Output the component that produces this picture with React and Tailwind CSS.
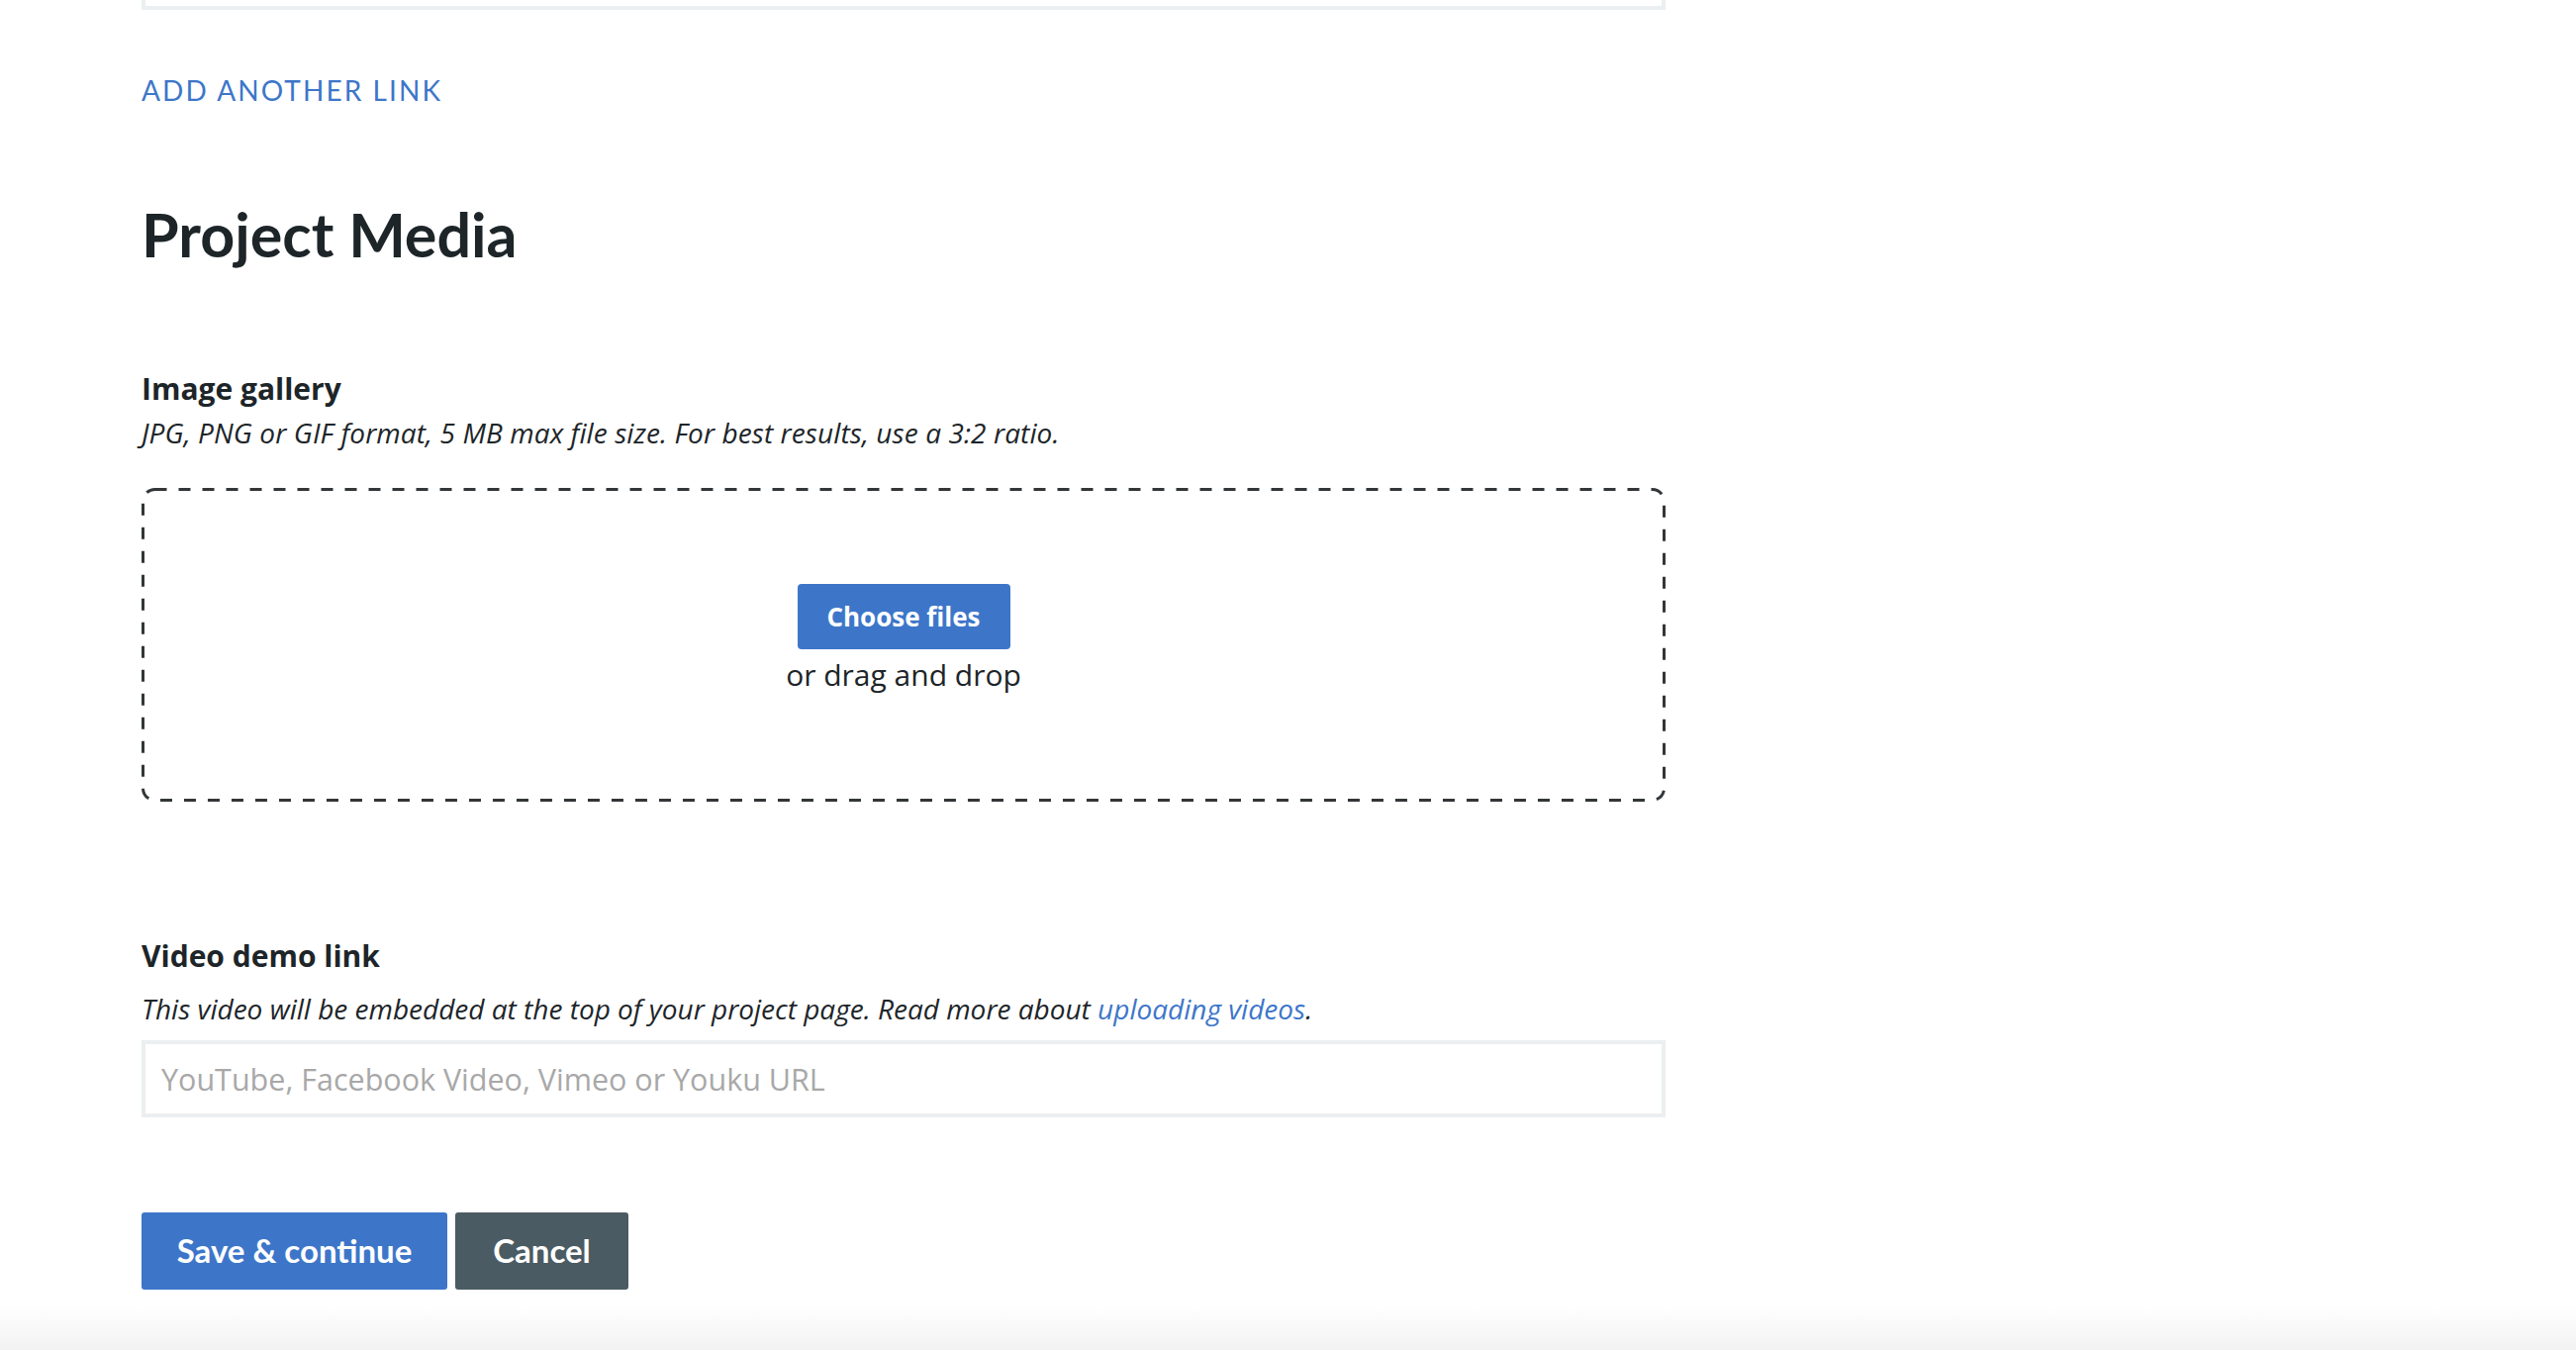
import React from "react";

const lato = { fontFamily: "Lato, 'Open Sans', sans-serif" };
const open = { fontFamily: "'Open Sans', Lato, sans-serif" };

export default function App() {
  return (
    <div className="w-full min-h-[1364px] bg-white text-[#1d2529] flex flex-col" style={lato}>
      <div className="pl-[143px] w-[1683px] flex flex-col">
        <div className="h-[10px] border-x-[4px] border-b-[4px] border-[#eceff1] bg-white" />
        <a className="mt-[67px] self-start text-[28px] leading-none tracking-[2.1px] text-[#3d76c9] uppercase">
          Add another link
        </a>
        <h1 className="mt-[101px] text-[61px] leading-none font-bold">Project Media</h1>

        <h3 className="mt-[111px] text-[30px] leading-none font-bold" style={open}>Image gallery</h3>
        <p className="mt-[15px] text-[28px] leading-none italic tracking-[0.1px]" style={open}>
          JPG, PNG or GIF format, 5 MB max file size. For best results, use a 3:2 ratio.
        </p>
        <div className="relative mt-[42px] h-[317px] rounded-[12px] flex flex-col items-center pt-[97px]">
          <svg className="absolute inset-0 w-full h-full pointer-events-none" preserveAspectRatio="none">
            <rect x="1.5" y="1.5" width="calc(100% - 3px)" height="calc(100% - 3px)" rx="12" fill="none" stroke="#333638" strokeWidth="3" strokeDasharray="12 12" />
          </svg>
          <button className="w-[215px] h-[66px] bg-[#3d76c9] text-white text-[26px] font-bold rounded-[4px]" style={open}>
            Choose files
          </button>
          <div className="mt-[11px] text-[30px] leading-none" style={open}>or drag and drop</div>
        </div>

        <h3 className="mt-[141px] text-[30px] leading-none font-bold" style={open}>Video demo link</h3>
        <p className="mt-[24px] text-[28px] leading-none italic" style={open}>
          This video will be embedded at the top of your project page. Read more about{" "}
          <a className="text-[#3d76c9]">uploading videos</a>.
        </p>
        <input
          className="mt-[18px] h-[78px] border-[4px] border-[#eceff1] px-[16px] text-[30.5px] outline-none placeholder:text-[#a8a8a8]"
          style={open}
          placeholder="YouTube, Facebook Video, Vimeo or Youku URL"
        />

        <div className="mt-[96px] flex gap-[8px]">
          <button className="w-[309px] h-[78px] bg-[#3d76c9] text-white text-[33px] font-bold rounded-[3px]">
            Save &amp; continue
          </button>
          <button className="w-[175px] h-[78px] bg-[#4b5b63] text-white text-[33px] font-bold rounded-[3px]">
            Cancel
          </button>
        </div>
      </div>
      <div className="mt-auto h-[44px] bg-gradient-to-b from-white to-[#f2f2f2]" />
    </div>
  );
}
